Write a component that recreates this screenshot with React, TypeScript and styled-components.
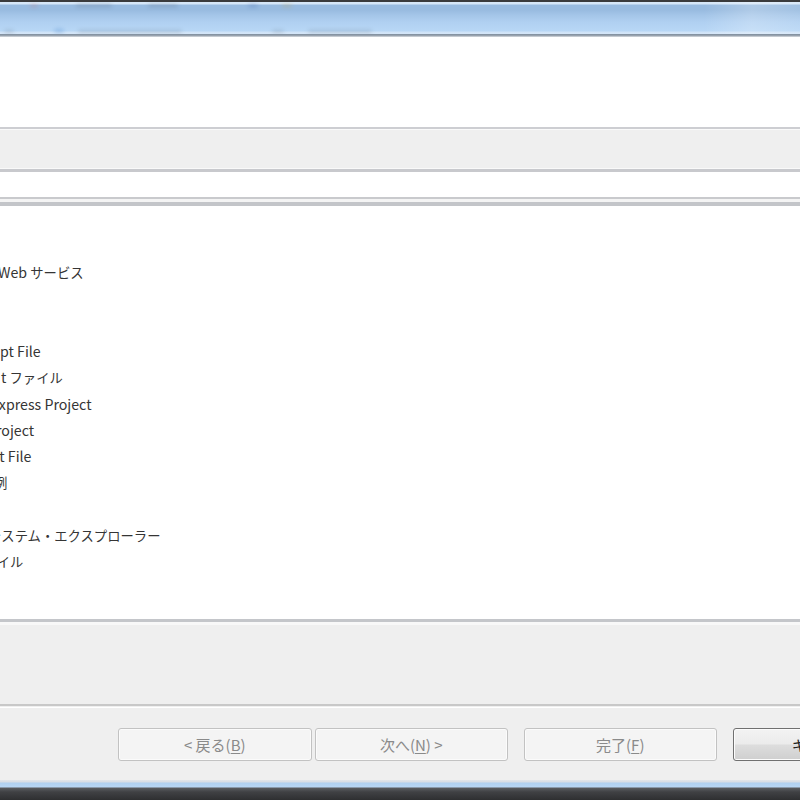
import React from "react";
import styled, { createGlobalStyle, css } from "styled-components";

const GlobalStyle = createGlobalStyle`
  html, body {
    margin: 0;
    padding: 0;
    width: 800px;
    height: 800px;
    overflow: hidden;
    background: #efefef;
  }
  #root { width: 800px; height: 800px; }
`;

const Frame = styled.div`
  width: 800px;
  height: 800px;
  display: flex;
  flex-direction: column;
  overflow: hidden;
  font-family: "Noto Sans CJK JP", "Noto Sans", sans-serif;
  font-size: 13.33px;
  color: #333;
`;

const TopEdge = styled.div`
  height: 2px;
  flex-shrink: 0;
  background: #3a3b3d;
`;

const TitleBar = styled.div`
  height: 32px;
  flex-shrink: 0;
  display: flex;
  flex-direction: column;
  justify-content: space-between;
  overflow: hidden;
  background:
    linear-gradient(to right, rgba(255,255,255,0) 0%, rgba(255,255,255,0) 88%, rgba(255,255,255,0.22) 94%, rgba(255,255,255,0.1) 100%),
    linear-gradient(
      to bottom,
      #d6e7f8 0px,
      #d6e7f8 2px,
      #98bbe0 3px,
      #98bbe0 8px,
      #a4c5e8 13px,
      #b0d0f1 20px,
      #b8d7f6 29px,
      #cfe3f7 30px,
      #d4e6f8 32px
    );
`;

const GhostRow = styled.div`
  display: flex;
  align-items: center;
  height: 6px;
`;

const Ghost = styled.span`
  display: block;
  flex-shrink: 0;
  margin-left: ${(p) => p.$x}px;
  width: ${(p) => p.$w}px;
  height: ${(p) => p.$h ?? 3}px;
  background: ${(p) => p.$c};
  opacity: 0.28;
  filter: blur(2px);
  border-radius: 2px;
`;

const TitleBorder = styled.div`
  height: 3px;
  flex-shrink: 0;
  background: linear-gradient(to bottom, #8593a2 0px, #8593a2 1px, #a9b1ba 2px, #dfe2e6 3px);
`;

const Banner = styled.div`
  height: 90px;
  flex-shrink: 0;
  background: #ffffff;
`;

const Etched = styled.div`
  height: 3px;
  flex-shrink: 0;
  background: linear-gradient(to bottom, #cdced2 0px, #cdced2 2px, #fafafa 2px, #fafafa 3px);
`;

const PageArea = styled.div`
  flex: 1;
  display: flex;
  flex-direction: column;
  background: #efefef;
`;

const LabelBand = styled.div`
  height: 38px;
  flex-shrink: 0;
  border-bottom: 1px solid #f9f9f9;
`;

const FilterBox = styled.div`
  height: 25px;
  flex-shrink: 0;
  background: #fff;
  border-top: 3px solid #c8c9cd;
  border-bottom: 2px solid #c9cacd;
`;

const Gap = styled.div`
  height: ${(p) => p.$h}px;
  flex-shrink: 0;
  background: ${(p) => p.$bg};
`;

const Tree = styled.div`
  height: 413px;
  flex-shrink: 0;
  background: #fff;
  border-top: 4px solid #c3c5c9;
  border-bottom: 3px solid #c4c6ca;
  display: flex;
  flex-direction: column;
  overflow: hidden;
`;

const TreeRow = styled.div`
  height: 26.36px;
  flex-shrink: 0;
  display: flex;
  align-items: center;
  white-space: nowrap;
  overflow: hidden;
`;

const RowLabel = styled.span`
  margin-left: ${(p) => p.$shift}px;
  color: #353535;
  font-size: 13.33px;
  line-height: 1;
`;

const Latin = styled.span`
  font-size: 14.2px;
`;

const Separator = styled.div`
  height: 4px;
  flex-shrink: 0;
  background: linear-gradient(to bottom, #c8c8c8 0px, #c8c8c8 2px, #efefef 2px, #efefef 3px, #ffffff 3px, #ffffff 4px);
`;

const ButtonBar = styled.div`
  height: 72px;
  flex-shrink: 0;
  display: flex;
  align-items: flex-start;
  padding: 20px 0 0 118px;
  gap: 15.5px;
  box-sizing: border-box;
  background: #efefef;
  white-space: nowrap;
`;

const ButtonPair = styled.div`
  display: flex;
  gap: 3px;
  flex-shrink: 0;
`;

const Button = styled.button`
  width: 193.5px;
  height: 33px;
  flex-shrink: 0;
  border-radius: 3px;
  font-family: "Noto Sans CJK JP", "Noto Sans", sans-serif;
  font-size: 15px;
  padding: 0;
  display: flex;
  align-items: center;
  justify-content: center;
  box-sizing: border-box;
  ${(p) =>
    p.$enabled
      ? css`
          border: 1px solid #707070;
          color: #222;
          background: linear-gradient(to bottom, #f3f3f3 0%, #ebebeb 48%, #dddddd 52%, #cfcfcf 100%);
          box-shadow: inset 0 0 0 1px #fcfcfc;
        `
      : css`
          border: 1px solid #c2c2c2;
          color: #8a8a8a;
          background: #f4f4f4;
          box-shadow: inset 0 0 0 1px #fbfbfb;
        `}
`;

const Mnemonic = styled.span`
  text-decoration: underline;
  text-underline-offset: 2px;
`;

const FrameBottom = styled.div`
  height: 20px;
  flex-shrink: 0;
  background: linear-gradient(
    to bottom,
    #e2e6ea 0px,
    #d7dde4 2px,
    #b0d0f0 3px,
    #b8d6f4 7px,
    #5a5c60 8px,
    #404144 12px,
    #2e2f31 20px
  );
`;

type Item = { text: string; shift: number };

const items: Item[] = [
  { text: "", shift: 0 },
  { text: "", shift: 0 },
  { text: "Web サービス", shift: -2 },
  { text: "", shift: 0 },
  { text: "", shift: 0 },
  { text: "pt File", shift: 0 },
  { text: "t ファイル", shift: 1 },
  { text: "Express Project", shift: -9 },
  { text: "Project", shift: -13 },
  { text: "st File", shift: -7 },
  { text: "例", shift: -6 },
  { text: "", shift: 0 },
  { text: "システム・エクスプローラー", shift: -12 },
  { text: "ファイル", shift: -30 },
];

function renderRuns(text: string) {
  const parts = text.split(/([A-Za-z][A-Za-z .]*)/).filter((s) => s.length > 0);
  return parts.map((s, i) =>
    /[A-Za-z]/.test(s) ? <Latin key={i}>{s}</Latin> : <React.Fragment key={i}>{s}</React.Fragment>
  );
}

export default function App() {
  return (
    <>
      <GlobalStyle />
      <Frame>
        <TopEdge />
        <TitleBar>
          <GhostRow>
            <Ghost $x={30} $w={8} $c="#d06060" />
            <Ghost $x={38} $w={36} $c="#556070" />
            <Ghost $x={36} $w={30} $c="#556070" />
            <Ghost $x={70} $w={10} $c="#3050a0" />
            <Ghost $x={24} $w={10} $c="#d0a030" />
          </GhostRow>
          <GhostRow>
            <Ghost $x={4} $w={10} $c="#607080" />
            <Ghost $x={40} $w={10} $c="#2a70c0" $h={4} />
            <Ghost $x={14} $w={104} $c="#607080" />
            <Ghost $x={90} $w={12} $c="#607080" />
            <Ghost $x={24} $w={64} $c="#607080" />
          </GhostRow>
        </TitleBar>
        <TitleBorder />
        <Banner />
        <Etched />
        <PageArea>
          <LabelBand />
          <FilterBox />
          <Gap $h={3} $bg="#f4f4f4" />
          <Tree>
            {items.map((it, i) => (
              <TreeRow key={i}>
                {it.text && <RowLabel $shift={it.shift}>{renderRuns(it.text)}</RowLabel>}
              </TreeRow>
            ))}
          </Tree>
          <Gap $h={3} $bg="#f8f8f8" />
          <Gap $h={79} $bg="#efefef" />
          <Separator />
          <ButtonBar>
            <ButtonPair>
              <Button disabled>
                &lt; 戻る(<Mnemonic>B</Mnemonic>)
              </Button>
              <Button disabled>
                次へ(<Mnemonic>N</Mnemonic>) &gt;
              </Button>
            </ButtonPair>
            <Button disabled>
              完了(<Mnemonic>F</Mnemonic>)
            </Button>
            <Button $enabled>キャンセル</Button>
          </ButtonBar>
          <FrameBottom />
        </PageArea>
      </Frame>
    </>
  );
}
